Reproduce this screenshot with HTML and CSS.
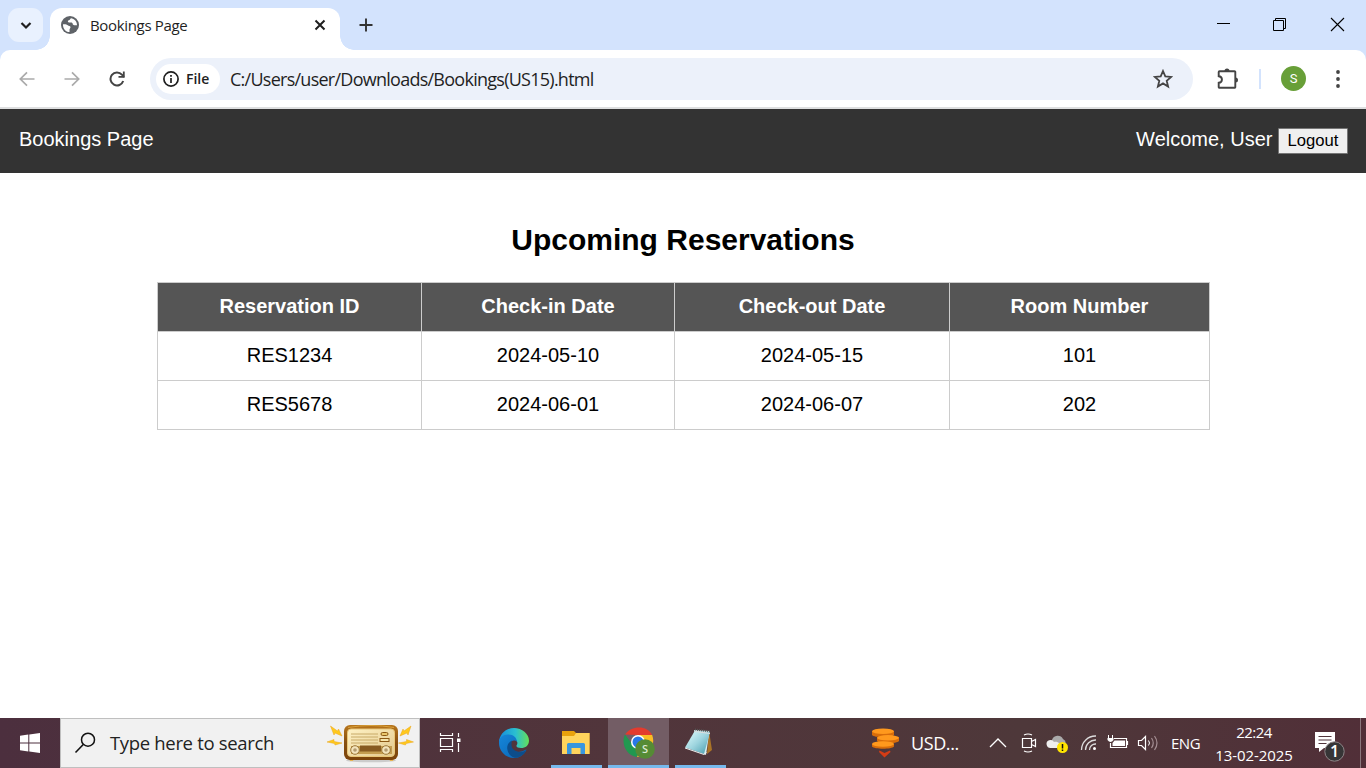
FILE: index.html
```html
<!DOCTYPE html>
<html lang="en">
<head>
<meta charset="utf-8">
<title>Bookings Page</title>
<link rel="stylesheet" href="styles.css">
</head>
<body>
<div class="screen">
  <div class="tabstrip">
    <div class="tab-search"><svg width="35" height="34" viewBox="0 0 35 34"><path d="M13.500 15l4.500 4.500 4.500-4.500" fill="none" stroke="#1f1f1f" stroke-width="2.200"/></svg></div>
    <div class="tab">
      <svg class="globe" width="18" height="18" viewBox="0 0 18 18"><circle cx="9" cy="9" r="9" fill="#5f6368"/><path d="M2 8.300c2-.3 4 .2 4.800 1 .8.900 2.400.5 2.700 1.700.2 1.300-1.200 1.800-1 2.900v2.200C4.600 16.100 1.700 12.500 2 8.300zM10.500 2.200c-1.800.2-1 1.700-2.500 2-1.300.3-1.400 1.200-.6 2 1 .9 3-.3 3.900.8.700.9.100 1.500 1.300 2 1 .4 2 .1 3.400.2.100-3.400-2.100-6-5.500-7z" fill="#fff"/></svg>
      <span class="tab-title">Bookings Page</span>
      <svg class="tab-close" width="12" height="12" viewBox="0 0 12 12"><path d="M1.500 1.500l9 9M10.500 1.500l-9 9" stroke="#1f1f1f" stroke-width="2"/></svg>
    </div>
    <svg class="new-tab" width="14" height="14" viewBox="0 0 14 14"><path d="M7 .5v13M.5 7h13" stroke="#333" stroke-width="1.900"/></svg>
    <div class="window-controls">
      <svg width="57" height="50" viewBox="0 0 57 50"><path d="M22 23.500h13" stroke="#000"/></svg>
      <svg width="57" height="50" viewBox="0 0 57 50"><path d="M21.500 20.500h10v10h-10zM23.500 20v-1.500h10v10H32" fill="none" stroke="#000"/></svg>
      <svg width="57" height="50" viewBox="0 0 57 50"><path d="M22 18l13 13M35 18L22 31" stroke="#000" stroke-width="1.100"/></svg>
    </div>
  </div>
  <div class="toolbar">
    <div class="nav-icons">
      <svg width="16" height="16" viewBox="0 0 16 16"><path d="M15.500 8H1.500M8 1.300L1.300 8 8 14.700" fill="none" stroke="#aaa" stroke-width="1.700"/></svg>
      <svg width="16" height="16" viewBox="0 0 16 16"><path d="M.5 8h14M8 1.300L14.700 8 8 14.700" fill="none" stroke="#aaa" stroke-width="1.700"/></svg>
      <svg width="16" height="16" viewBox="0 0 16 16"><path d="M14.200 10A6.500 6.500 0 1 1 12.900 3.700L15 6" fill="none" stroke="#444" stroke-width="2"/><path d="M15.700.5v6.200H9.500V4.900h4.400V.5z" fill="#444"/></svg>
    </div>
    <div class="omnibox">
      <div class="file-chip">
        <svg width="16" height="16" viewBox="0 0 16 16"><circle cx="8" cy="8" r="7.100" fill="none" stroke="#1f1f1f" stroke-width="1.700"/><path d="M8 7v5M8 4v1.800" stroke="#1f1f1f" stroke-width="1.700"/></svg>
        <span>File</span>
      </div>
      <span class="url">C:/Users/user/Downloads/Bookings(US15).html</span>
      <svg class="star" width="20" height="20" viewBox="0 0 20 20"><path d="M10 2l2.300 5.400 5.900.5-4.500 3.900 1.400 5.700-5.100-3.100-5.100 3.100 1.400-5.700-4.500-3.900 5.900-.5z" fill="none" stroke="#444" stroke-width="1.800"/></svg>
    </div>
    <svg class="puzzle" width="22" height="22" viewBox="0 0 22 22"><path d="M3 3.700h15a.8.800 0 0 1 .8.800v15a.8.800 0 0 1-.8.800H3a.8.800 0 0 1-.8-.8v-4.200c4.300-.2 4.300-6.400 0-6.600V4.500a.8.800 0 0 1 .8-.8z" transform="translate(-.5 -.5)" fill="none" stroke="#444" stroke-width="1.900"/><path d="M7.500 3a2.500 2.500 0 0 1 5 0zM18.500 9.500a2.500 2.500 0 0 1 0 5z" fill="#444"/></svg>
    <i class="divider"></i>
    <span class="avatar">S</span>
    <svg class="more" width="4" height="18" viewBox="0 0 4 18"><g fill="#444"><circle cx="2" cy="2" r="1.900"/><circle cx="2" cy="9" r="1.900"/><circle cx="2" cy="16" r="1.900"/></g></svg>
  </div>

  <main class="page">
    <header class="page-header">
      <div>Bookings Page</div>
      <div class="user">Welcome, User <button class="logout">Logout</button></div>
    </header>
    <h2 class="heading">Upcoming Reservations</h2>
    <table class="reservations">
      <colgroup><col class="col-id"><col class="col-in"><col class="col-out"><col class="col-room"></colgroup>
      <tr><th>Reservation ID</th><th>Check-in Date</th><th>Check-out Date</th><th>Room Number</th></tr>
      <tr><td>RES1234</td><td>2024-05-10</td><td>2024-05-15</td><td>101</td></tr>
      <tr><td>RES5678</td><td>2024-06-01</td><td>2024-06-07</td><td>202</td></tr>
    </table>
  </main>

  <footer class="taskbar">
    <div class="start"><svg width="20" height="20" viewBox="0 0 20 20"><path d="M0 2.800l8.300-1.200v7.900H0zM9.300 1.400L20 0v9.500H9.300zM0 10.500h8.300v7.900L0 17.200zM9.300 10.500H20V20L9.300 18.600z" fill="#fff"/></svg></div>
    <div class="search">
      <svg class="lens" width="22" height="22" viewBox="0 0 22 22"><circle cx="14" cy="7.700" r="6.500" fill="none" stroke="#111" stroke-width="1.500"/><path d="M9.500 12.300L1.500 20.500" stroke="#111" stroke-width="1.600"/></svg>
      <span class="search-text">Type here to search</span>
      <svg class="radio" width="90" height="42" viewBox="0 0 90 42">
        <defs>
          <linearGradient id="wood" x2="0" y2="1"><stop stop-color="#b8761c"/><stop offset=".5" stop-color="#875012"/><stop offset="1" stop-color="#7b430b"/></linearGradient>
          <linearGradient id="face" x2="1" y2="1"><stop stop-color="#fff2c5"/><stop offset="1" stop-color="#e3c88c"/></linearGradient>
        </defs>
        <ellipse cx="44" cy="38.500" rx="25" ry="1.800" fill="#ccc"/>
        <path d="M22 36h5l-1 3h-3zM62 36h5l-1 3h-3z" fill="#e7b452"/>
        <rect x="17" y="3" width="54" height="35" rx="6" fill="url(#wood)"/>
        <path d="M21 5.500q23-4 46 0" stroke="#d9a23b" fill="none"/>
        <rect x="20.500" y="7" width="47" height="27.500" rx="3.500" fill="url(#face)" stroke="#e9c779"/>
        <path d="M24 12h27M24 15h27M24 18h27M24 21h27" stroke="#c8aa68"/>
        <rect x="54" y="10.500" width="7" height="3" rx="1.500" fill="#e9c66c" stroke="#8b5713"/>
        <rect x="53" y="16.500" width="9" height="3" fill="#f7e5ac" stroke="#8b5713"/>
        <path d="M24 24h41v8H24z" fill="#c49d50"/><path d="M33 23.500h21v6H33z" fill="#875a20"/>
        <circle cx="28" cy="28" r="4.300" fill="#f4e5bd" stroke="#9b7638"/><circle cx="59" cy="28" r="4.300" fill="#f4e5bd" stroke="#9b7638"/>
        <circle cx="28" cy="28" r="1.800" fill="#b39b70"/><circle cx="59" cy="28" r="1.800" fill="#b39b70"/>
        <path d="M3.500 4l7 5 1-2 3.500 7-7-3-1 2zM0 20l7-2.500v2l8 1.500-7 2-.5-1.500zM84 4l-7 5-1-2-3 7 7-3 1 2zM86.500 20l-7-2.500v2l-8 1.500 7 2 .5-1.500z" fill="#ffc91c" stroke="#eba51c" stroke-width=".5"/>
      </svg>
    </div>
    <div class="app task-view"><svg width="22" height="22" viewBox="0 0 22 22"><path d="M1.500 1v2.500h12V1M1.500 20v-2.500h12V20M1.500 6.500h12v8h-12zM19.500 1v4M19.500 11v9" fill="none" stroke="#fff" stroke-width="1.200"/><path d="M18 6.500h3.500V10H18z" fill="#fff"/></svg></div>
    <div class="app edge"><svg width="30" height="30" viewBox="0 0 30 30">
      <defs><linearGradient id="edge-top"><stop stop-color="#168bdc"/><stop offset=".55" stop-color="#2abfd1"/><stop offset="1" stop-color="#65df59"/></linearGradient><linearGradient id="edge-body" x2="1" y2="1"><stop stop-color="#1686d8"/><stop offset="1" stop-color="#0864b6"/></linearGradient></defs>
      <path d="M0 14C.5 6 7 0 15 0s15 6 15 12.500c0 5-3.500 7.500-8 7.500-3 0-5-1.200-4.500-2.400 3-4.200-2-8.500-8-7.500-4 .7-7.500 2-9.500 3.900z" fill="url(#edge-top)"/>
      <path d="M0 15c0-6 5-9 9.500-8.500 5 0 8.500 3.500 8.500 7.500-2-2.500-6.500-1.500-7.500 2-1 6 6 9 12 7.500 2-.4 4.200-2 5-2C25 27 20.500 30 15 30 6.500 30 0 23 0 15z" fill="url(#edge-body)"/>
      <path d="M13 12.500c-4 2-5.500 6-4.500 9.500 1 4.500 4.500 7.500 8.500 7.700 4.500-.5 8.500-3.500 10.500-7.700-6 4-15.500 1.500-15-6 0-1.400.4-2.500.5-3.500z" fill="#0d4d8b"/>
    </svg></div>
    <div class="app files open"><svg width="28" height="24" viewBox="0 0 28 24"><path d="M0 0h12l2 2h13.500v21H0z" fill="#e9a20c"/><path d="M0 5h12l2-3h13.500v21H0z" fill="#ffd45c"/><path d="M5 23V13.500a1.500 1.500 0 0 1 1.500-1.500h15a1.500 1.500 0 0 1 1.500 1.500V23h-4.500v-6h-9v6z" fill="#3896df"/></svg></div>
    <div class="app chrome open"><svg width="32" height="32" viewBox="0 0 32 32"><path d="M2 7.500C8-2 25-2 29 8H15z" fill="#e33b2e"/><path d="M2 7.500C-2 15 2 28 14 30l5-11-9-1z" fill="#219850"/><path d="M15 8h14.200c4 11-4 22-15.200 22l6-12z" fill="#f9bd24"/><circle cx="15" cy="15" r="7" fill="#fff"/><circle cx="15" cy="15" r="5.500" fill="#2878e8"/><circle cx="22" cy="22" r="9.800" fill="#558b35"/><text x="22" y="26.200" text-anchor="middle" class="profile-letter">S</text></svg></div>
    <div class="app notepad open"><svg width="28" height="28" viewBox="0 0 28 28"><defs><linearGradient id="paper" x2="1" y2="1"><stop stop-color="#e5ffff"/><stop offset=".5" stop-color="#9ed5df"/><stop offset="1" stop-color="#4299aa"/></linearGradient></defs><path d="M24 3l3 19-5 4z" fill="#aa7427"/><path d="M9 2l15.500 1-3.500 24L15 24z" fill="#d9eeee"/><path d="M10 2.500L25 4l-6 22L0 19.500z" fill="url(#paper)"/><path d="M0 20l19 6.500 2.500-2" fill="none" stroke="#eee"/><path d="M10 1.500l15 2" stroke="#555" stroke-width="2" stroke-dasharray="1 1"/><path d="M10 3.500l15 2" stroke="#ddd"/></svg></div>

    <div class="news"><svg width="29" height="30" viewBox="0 0 29 30"><g fill="#d86d0a"><path d="M1 16v2.500c2 3 20 3 22 0V16zM6 9.500V13c2 3 20 3 22 0V9.500zM1 3v4c2 3 20 3 22 0V3z"/></g><g fill="#ff991d"><ellipse cx="12" cy="16" rx="11" ry="2.700"/><ellipse cx="17" cy="9.800" rx="11" ry="2.700"/><ellipse cx="12" cy="3.300" rx="11" ry="2.800"/></g><path d="M8.500 22.500l5 2.500 5.500-2.500.5 1.500-6 5.500L8 24z" fill="#d53c15"/></svg><span>USD...</span></div>
    <div class="tray">
      <svg width="30" height="24" viewBox="0 0 30 24"><path d="M7 16l8-8 8 8" fill="none" stroke="#fff" stroke-width="1.300"/></svg>
      <svg width="30" height="24" viewBox="0 0 30 24"><path d="M9.500 7.500h9v9h-9zM18.500 10.500l4-2v7l-4-2M11 4q4-2 8 0M11 20q4 2 8 0" fill="none" stroke="#fff" stroke-width="1.200"/></svg>
      <svg width="30" height="24" viewBox="0 0 30 24"><path d="M8 16a4 4 0 0 1 1-7 6 6 0 0 1 11-1 5 5 0 0 1 0 9z" fill="#aaa"/><path d="M8 17a4 4 0 1 1 3-6c4-1 7 2 7 6z" fill="#eee"/><circle cx="19.500" cy="16.500" r="5.500" fill="#ffe500"/><path d="M19.500 13v4.500M19.500 18.500V20" stroke="#111" stroke-width="1.500"/></svg>
      <svg width="30" height="24" viewBox="0 0 30 24"><g fill="none" stroke="#ddd" stroke-width="1.300"><path d="M8.500 19A14 14 0 0 1 23 5M12.500 19A10 10 0 0 1 23 9M16.500 19a6 6 0 0 1 6.500-6"/></g><circle cx="21.500" cy="17.500" r="1.500" fill="#fff"/></svg>
      <svg width="30" height="24" viewBox="0 0 30 24"><path d="M11 7.500h12.500v9h-16V12M24.500 10v4" fill="none" stroke="#fff" stroke-width="1.200"/><path d="M11.500 9.500H22V15H9.500v-3z" fill="#fff"/><path d="M5.500 4v3M9.500 4v3" stroke="#fff"/><path d="M4.500 7h6v2q-3 4-6 0z" fill="#fff"/></svg>
      <svg width="30" height="24" viewBox="0 0 30 24"><path d="M5.500 9.500h3l4-4v13l-4-4h-3z" fill="none" stroke="#fff" stroke-width="1.200"/><path d="M15.500 9.500q2 2.500 0 5" fill="none" stroke="#fff"/><path d="M18.500 7q3.500 5 0 10M21.500 5q5 7 0 14" fill="none" stroke="#a58f94" stroke-width="1.200"/></svg>
    </div>
    <span class="lang">ENG</span>
    <div class="clock"><span class="time">22:24</span><span class="date">13-02-2025</span></div>
    <div class="notice"><svg width="32" height="32" viewBox="0 0 32 32"><path d="M1 1h20v16H10l-5 4v-4H1z" fill="#fff"/><path d="M4.500 5.500h13M4.500 9h13M4.500 12.500h8" stroke="#51353c" stroke-width="1.200"/><circle cx="20.500" cy="20.500" r="9.700" fill="#363536" stroke="#8c8587"/><text x="20.500" y="26.200" text-anchor="middle" class="notice-count">1</text></svg></div>
    <i class="show-desktop"></i>
  </footer>
</div>
</body>
</html>
```
FILE: styles.css
```css
* { box-sizing: border-box; }
body { margin: 0; background: #fff; color: #000; font-family: "Liberation Sans", Arial, sans-serif; }
svg { display: block; flex: none; }
.screen { width: 1366px; height: 768px; display: flex; flex-direction: column; overflow: hidden; background: #d3e3fd; }

.tabstrip { height: 50px; flex: none; display: flex; padding-left: 8px; }
.tab-search { width: 35px; height: 34px; margin: 8px 7px 0 0; border-radius: 11px; background: #e9f1fe; }
.tab { position: relative; width: 290px; height: 42px; margin-top: 8px; padding: 0 14px 9px 11px; display: flex; align-items: center; border-radius: 12px 12px 0 0; background: #fff; }
.tab::before, .tab::after { content: ""; position: absolute; bottom: 0; width: 14px; height: 14px; }
.tab::before { left: -14px; background: radial-gradient(circle at 0 0, transparent 13.500px, #fff 14px); }
.tab::after { right: -14px; background: radial-gradient(circle at 100% 0, transparent 13.500px, #fff 14px); }
.tab-title { margin-left: 11px; font: 15px "Open Sans", sans-serif; letter-spacing: -.33px; color: #1f1f1f; white-space: nowrap; }
.tab-close { margin-left: auto; }
.new-tab { margin: 18px 0 0 19px; }
.window-controls { display: flex; margin-left: auto; }

.toolbar { height: 59px; flex: none; display: flex; align-items: center; padding: 0 26px 0 20px; border-bottom: 2px solid #dedfe0; border-radius: 10px 10px 0 0; background: #fff; }
.nav-icons { display: flex; gap: 29px; width: 131px; margin-left: -1px; }
.omnibox { width: 1043px; height: 42px; display: flex; align-items: center; padding: 0 20px 0 6px; border-radius: 21px; background: #ecf1fa; }
.file-chip { width: 64px; height: 30px; display: flex; align-items: center; gap: 7px; padding-left: 7px; border-radius: 15px; background: #fff; font: 600 14px "Open Sans", sans-serif; color: #1f1f1f; }
.url { margin-left: 10px; font: 18px "Open Sans", sans-serif; letter-spacing: -.74px; color: #1f1f1f; white-space: nowrap; }
.star { margin-left: auto; }
.puzzle { margin-left: 24px; }
.divider { width: 2px; height: 20px; margin-left: 20px; background: #d3e3fd; }
.avatar { width: 25px; height: 25px; margin-left: 20px; border-radius: 50%; background: #689f38; color: #fff; font: 13px/25px Roboto, sans-serif; text-align: center; }
.more { margin-left: auto; }

.page { flex: 1; min-height: 0; background: #fff; }
.page-header { height: 64px; display: flex; justify-content: space-between; padding: 18px 18px 0 19px; background: #333; color: #fff; font-size: 20px; line-height: 24px; }
.user { white-space: nowrap; }
.logout { width: 70px; height: 26px; margin: 0; padding: 0; border: 1px solid #767676; border-radius: 1px; background: #efefef; color: #000; font: 16.670px "Liberation Sans", Arial, sans-serif; vertical-align: 0; }
.heading { margin: 49px 0 25px; font-size: 30px; line-height: 35px; text-align: center; }
.reservations { width: 1053px; margin: 0 0 0 157px; border-collapse: collapse; table-layout: fixed; font-size: 20px; line-height: 23px; text-align: center; }
.reservations th, .reservations td { height: 49px; padding: 0 0 2px; border: 1px solid #ccc; }
.reservations th { background: #555; color: #fff; }
.col-id { width: 264px; }
.col-in { width: 253px; }
.col-out { width: 275px; }
.col-room { width: 260px; }

.taskbar { height: 50px; flex: none; display: flex; background: linear-gradient(90deg, #4c2f3e, #51353b 45%, #4e383a 75%, #512f38); color: #fff; font-family: "Open Sans", sans-serif; }
.start { width: 60px; display: grid; place-items: center; }
.search { width: 360px; display: flex; align-items: center; padding: 0 2px 0 13px; border: 1px solid #bfbfbf; background: #f1f1f1; color: #222; }
.search-text { margin-left: 14px; padding-bottom: 2px; font-size: 18.500px; letter-spacing: -.33px; white-space: nowrap; }
.radio { margin-left: auto; }
.app { display: grid; place-items: center; }
.task-view { width: 60px; }
.edge { width: 68px; }
.open { border-bottom: 3px solid #76b9ed; padding-top: 2px; }
.files { width: 51px; margin: 0 6px 0 3px; padding-right: 2px; }
.chrome { width: 61px; background: #735d65; }
.notepad { width: 51px; margin-left: 6px; padding: 0 3px 0 0; }
.profile-letter { fill: #dce8d3; font: 600 11px "Open Sans", sans-serif; }
.news { display: flex; align-items: center; width: 112px; margin-left: 145px; font-size: 18px; letter-spacing: -.4px; }
.news span { margin-left: 11px; }
.tray { display: flex; align-items: center; width: 188px; }
.lang { align-self: center; width: 37px; font-size: 15px; letter-spacing: -.5px; }
.clock { width: 92px; display: flex; flex-direction: column; align-items: center; padding-top: 3px; font-size: 15px; line-height: 22.500px; letter-spacing: -.5px; }
.date { letter-spacing: -.1px; }
.notice { width: 60px; padding: 13px 0 0 14px; }
.notice-count { fill: #fff; font: 600 16px "Open Sans", sans-serif; }
.show-desktop { width: 6px; border-left: 1px solid #8b777d; }
```
